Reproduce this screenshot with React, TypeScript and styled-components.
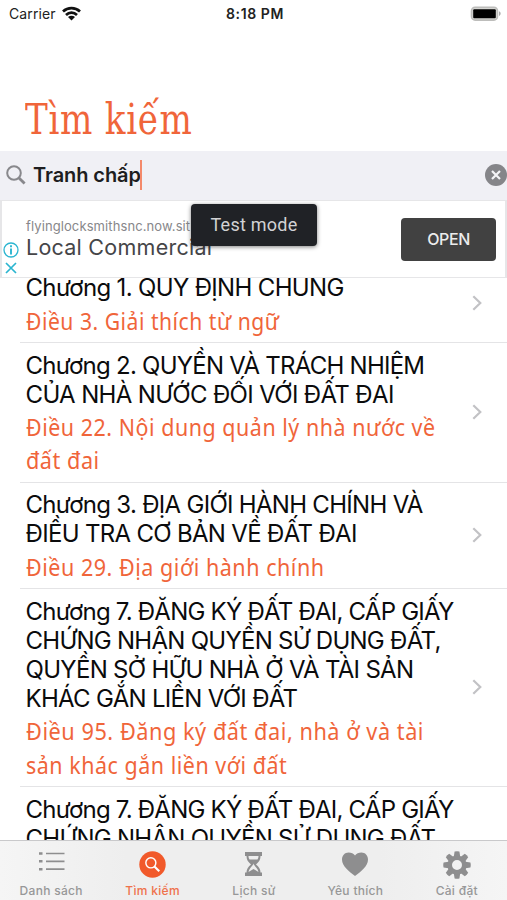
import React from 'react';
import styled, { createGlobalStyle } from 'styled-components';

const ORANGE = '#f0653a';

const Global = createGlobalStyle`
  * { box-sizing: border-box; }
  body { margin: 0; background: #fff; font-family: Inter, "Noto Sans", sans-serif; }
`;

const Screen = styled.main`
  display: flex;
  flex-direction: column;
  width: 507px;
  height: 900px;
  overflow: hidden;
  background: #fff;
  color: #0b0b0c;
`;

const StatusBar = styled.header`
  display: grid;
  grid-template-columns: 1fr auto 1fr;
  align-items: center;
  flex: none;
  height: 27px;
  padding: 0 6px 0 9px;
  font-size: 14px;
  line-height: 27px;
  color: #222;
`;

const Carrier = styled.div`
  display: flex;
  align-items: center;
  gap: 6px;
  letter-spacing: 0.1px;
`;

const Clock = styled.div`
  font-weight: 600;
  letter-spacing: 0.6px;
`;

const Battery = styled.div`
  display: flex;
  justify-content: flex-end;
  padding-bottom: 1px;
`;

const TitleBar = styled.div`
  display: flex;
  align-items: flex-end;
  flex: none;
  height: 124px;
  padding: 0 25px 6px;
`;

const Title = styled.h1`
  margin: 0;
  font: 400 42px/50px "DejaVu Serif Condensed", "DejaVu Serif", serif;
  font-stretch: condensed;
  letter-spacing: 0.8px;
  color: ${ORANGE};
  white-space: nowrap;
  transform: scaleX(0.903);
  transform-origin: left;
`;

const SearchBar = styled.div`
  display: flex;
  align-items: center;
  flex: none;
  height: 49px;
  padding: 0 0 1px 6px;
  background: #f0f0f5;
`;

const Query = styled.div`
  flex: 1;
  display: flex;
  align-items: center;
  margin-left: 7px;
  font-size: 20px;
  font-weight: 600;
  line-height: 28px;
  letter-spacing: -0.08px;
  color: #1d1d20;
`;

const Caret = styled.span`
  width: 2px;
  height: 30px;
  margin-left: -1px;
  background: #f4896a;
`;

const Ad = styled.section`
  position: relative;
  display: flex;
  align-items: center;
  flex: none;
  height: 78px;
  padding-right: 9px;
  background: #fff;
  border: solid #e6e6e8;
  border-width: 1px 2px 1px 2px;
`;

const AdMarks = styled.div`
  display: flex;
  flex-direction: column;
  align-items: center;
  align-self: flex-end;
  gap: 4px;
  width: 18px;
  padding-bottom: 3px;
`;

const AdCopy = styled.div`
  flex: 1;
  padding: 0 0 1px 6px;
  white-space: nowrap;
`;

const AdUrl = styled.div`
  font-size: 13px;
  line-height: 17px;
  letter-spacing: 0.1px;
  color: #87878a;
`;

const AdTitle = styled.div`
  font-size: 21.5px;
  font-weight: 430;
  line-height: 25px;
  letter-spacing: 0.25px;
  color: #454548;
`;

const OpenButton = styled.button`
  flex: none;
  width: 95px;
  height: 43px;
  padding: 0 0 1px;
  border: 0;
  border-radius: 4px;
  background: #414141;
  color: #ececec;
  font: 500 16px Inter, sans-serif;
  letter-spacing: -0.4px;
`;

const Toast = styled.div`
  position: absolute;
  left: 189px;
  top: 3px;
  width: 126px;
  height: 42px;
  border-radius: 4px;
  background: #202226;
  box-shadow: 0 1px 4px rgba(0, 0, 0, 0.5);
  color: #d2d2d4;
  font: 400 18px/42px Roboto, sans-serif;
  letter-spacing: 0.25px;
  text-align: center;
`;

const ListView = styled.div`
  flex: 1;
  min-height: 0;
  overflow: hidden;
`;

const List = styled.ul`
  margin: -12px 0 0;
  padding: 0;
  list-style: none;
`;

const Row = styled.li`
  display: flex;
  align-items: center;
  justify-content: space-between;
  margin-left: 20px;
  padding: 7.4px 25px 5.3px 5.5px;
  border-bottom: 1px solid #e4e4e6;
`;

const Chapter = styled.div<{ $spacing: number }>`
  height: 29.2px;
  font-size: 24px;
  line-height: 29.2px;
  letter-spacing: ${(p) => p.$spacing}px;
  white-space: nowrap;
`;

const Articles = styled.div`
  padding-top: 1px;
`;

const Article = styled.div<{ $squeeze: number }>`
  width: 0;
  height: 33.3px;
  font: 400 24px/33.3px "Noto Sans", sans-serif;
  letter-spacing: 0.6px;
  color: ${ORANGE};
  white-space: nowrap;
  transform: scaleX(${(p) => p.$squeeze});
  transform-origin: left;
`;

const Disclosure = styled.div`
  display: flex;
  padding-bottom: 4px;
`;

const TabBar = styled.nav`
  display: grid;
  grid-template-columns: repeat(5, 1fr);
  flex: none;
  height: 60px;
  border-top: 1px solid #c9c9cb;
  background: linear-gradient(90deg, #f5f5f5, #eeeeee 25%, #eeeeee 75%, #f5f5f5);
`;

const Tab = styled.div<{ $active?: boolean }>`
  display: flex;
  flex-direction: column;
  align-items: center;
  padding-left: 1px;
  color: ${(p) => (p.$active ? ORANGE : '#8e8e8f')};
`;

const TabIcon = styled.div`
  display: flex;
  align-items: flex-start;
  height: 28px;
  margin-top: 10px;
`;

const TabLabel = styled.span`
  margin-top: 4px;
  font-size: 12px;
  font-weight: 500;
  line-height: 16px;
  letter-spacing: 0.3px;
  opacity: 0.9;
`;

type Line = [text: string, fit: number];

const rows: { chapter: Line[]; article: Line[] }[] = [
  {
    chapter: [['Chương 1. QUY ĐỊNH CHUNG', -0.66]],
    article: [['Điều 3. Giải thích từ ngữ', 0.879]],
  },
  {
    chapter: [
      ['Chương 2. QUYỀN VÀ TRÁCH NHIỆM', -0.75],
      ['CỦA NHÀ NƯỚC ĐỐI VỚI ĐẤT ĐAI', -0.65],
    ],
    article: [
      ['Điều 22. Nội dung quản lý nhà nước về', 0.893],
      ['đất đai', 0.9],
    ],
  },
  {
    chapter: [
      ['Chương 3. ĐỊA GIỚI HÀNH CHÍNH VÀ', -0.7],
      ['ĐIỀU TRA CƠ BẢN VỀ ĐẤT ĐAI', -0.68],
    ],
    article: [['Điều 29. Địa giới hành chính', 0.896]],
  },
  {
    chapter: [
      ['Chương 7. ĐĂNG KÝ ĐẤT ĐAI, CẤP GIẤY', -0.77],
      ['CHỨNG NHẬN QUYỀN SỬ DỤNG ĐẤT,', -0.73],
      ['QUYỀN SỞ HỮU NHÀ Ở VÀ TÀI SẢN', -0.7],
      ['KHÁC GẮN LIỀN VỚI ĐẤT', -0.7],
    ],
    article: [
      ['Điều 95. Đăng ký đất đai, nhà ở và tài', 0.904],
      ['sản khác gắn liền với đất', 0.893],
    ],
  },
  {
    chapter: [
      ['Chương 7. ĐĂNG KÝ ĐẤT ĐAI, CẤP GIẤY', -0.77],
      ['CHỨNG NHẬN QUYỀN SỬ DỤNG ĐẤT,', -0.73],
    ],
    article: [],
  },
];

const WifiIcon = () => (
  <svg width="19" height="15" viewBox="0 0 19 15" fill="none" stroke="#111" strokeWidth="2.7">
    <path d="M1 5.400C5.800.9 13.200.9 18 5.400" />
    <path d="M4 8.900c3.200-3 7.800-3 11 0" />
    <path d="M9.500 14.600 6 11.100c2-1.800 5-1.800 7 0z" fill="#111" stroke="none" />
  </svg>
);

const BatteryIcon = () => (
  <svg width="31" height="15" viewBox="0 0 31 15">
    <rect x="1.500" y="1.300" width="26" height="12.800" rx="3.600" fill="#d6d6d3" stroke="#bdbdbb" strokeWidth="1.600" />
    <rect x="3.200" y="3.200" width="22.600" height="9" rx="1" fill="#000" />
    <path d="M29 5.300c2.200.8 2.200 3.800 0 4.600z" fill="#aaa" />
  </svg>
);

const SearchIcon = () => (
  <svg width="20" height="20" viewBox="0 0 20 20" fill="none" stroke="#88888c">
    <circle cx="8" cy="8" r="6.800" strokeWidth="2" />
    <path d="m13 13 5.600 5.600" strokeWidth="2.800" />
  </svg>
);

const ClearIcon = () => (
  <svg width="22" height="22" viewBox="0 0 22 22">
    <circle cx="11" cy="11" r="11" fill="#858589" />
    <path d="m7 7 8 8M15 7l-8 8" stroke="#f4f4f8" strokeWidth="2.200" />
  </svg>
);

const InfoIcon = () => (
  <svg width="16" height="16" viewBox="0 0 16 16" fill="none" stroke="#2bb5d0">
    <circle cx="8" cy="8" r="7" strokeWidth="1.300" />
    <path d="M8 3.300v2M8 6.500v6" strokeWidth="1.900" />
  </svg>
);

const CloseIcon = () => (
  <svg width="12" height="12" viewBox="0 0 12 12" stroke="#2bb5d0" strokeWidth="1.700">
    <path d="m1 1 10 10M11 1 1 11" />
  </svg>
);

const ChevronIcon = () => (
  <svg width="10" height="16" viewBox="0 0 10 16" fill="none" stroke="#c2c2c5" strokeWidth="2.200">
    <path d="m1.300 1.200 7 6.800-7 6.800" />
  </svg>
);

const ListIcon = () => (
  <svg width="27" height="20" viewBox="0 0 27 20" stroke="currentColor" strokeWidth="1.700">
    <path d="M8 2.500h18.500M8 10.300h18.500M8 18.200h18.500" />
    <path d="M1 2.500h3.500M1 10.300h3.500M1 18.200h3.500" strokeWidth="2.500" />
  </svg>
);

const SearchBadgeIcon = () => (
  <svg width="27" height="27" viewBox="0 0 28 28">
    <circle cx="14" cy="14" r="13.700" fill="#f1592a" />
    <circle cx="12.300" cy="12.300" r="5.200" fill="none" stroke="#fff" strokeWidth="1.500" />
    <path d="m16 16 5 5" stroke="#fff" strokeWidth="2.200" />
  </svg>
);

const HourglassIcon = () => (
  <svg width="19" height="26" viewBox="0 0 19 26">
    <path
      d="M1 1h17v4h-1.500c0 3.500-1.500 6-4.500 8.500 3 2.500 4.500 4.500 4.500 8H18V25H1v-3.500h1.500c0-3.500 1.500-5.500 4.500-8C4 11 2.500 8.500 2.500 5H1z"
      fill="currentColor"
    />
    <path d="M4.500 5h10c0 1.500-.4 2.500-1 3.500h-8c-.6-1-1-2-1-3.500zM9.500 12.500c.5 2.500 4 4 5 8.500l-5-3-5 3c1-4.500 4.500-6 5-8.500z" fill="#eee" />
  </svg>
);

const HeartIcon = () => (
  <svg width="28" height="26" viewBox="0 0 28 26">
    <path d="M14 25C8 20.500 1 15 1 8.500 1 4.300 4 1.500 7.500 1.500c2.800 0 5.200 1 6.500 3 1.300-2 3.700-3 6.500-3C24 1.500 27 4.300 27 8.500 27 15 20 20.500 14 25z" fill="currentColor" />
  </svg>
);

const GearIcon = () => (
  <svg width="28" height="28" viewBox="0 0 28 28">
    <g fill="currentColor">
      {[0, 45, 90, 135, 180, 225, 270, 315].map((angle) => (
        <path key={angle} d="M10.600 7 11.600.6q2.400-.7 4.800 0L17.400 7z" transform={`rotate(${angle} 14 14)`} />
      ))}
    </g>
    <circle cx="14" cy="14" r="7.300" fill="none" stroke="currentColor" strokeWidth="4.600" />
  </svg>
);

const tabs = [
  { label: 'Danh sách', icon: <ListIcon /> },
  { label: 'Tìm kiếm', icon: <SearchBadgeIcon />, active: true },
  { label: 'Lịch sử', icon: <HourglassIcon /> },
  { label: 'Yêu thích', icon: <HeartIcon /> },
  { label: 'Cài đặt', icon: <GearIcon /> },
];

export default function App() {
  return (
    <Screen>
      <Global />
      <StatusBar>
        <Carrier>
          Carrier
          <WifiIcon />
        </Carrier>
        <Clock>8:18 PM</Clock>
        <Battery>
          <BatteryIcon />
        </Battery>
      </StatusBar>
      <TitleBar>
        <Title>Tìm kiếm</Title>
      </TitleBar>
      <SearchBar>
        <SearchIcon />
        <Query>
          Tranh chấp
          <Caret />
        </Query>
        <ClearIcon />
      </SearchBar>
      <Ad>
        <AdMarks>
          <InfoIcon />
          <CloseIcon />
        </AdMarks>
        <AdCopy>
          <AdUrl>flyinglocksmithsnc.now.sit</AdUrl>
          <AdTitle>Local Commercial</AdTitle>
        </AdCopy>
        <OpenButton>OPEN</OpenButton>
        <Toast>Test mode</Toast>
      </Ad>
      <ListView>
        <List>
          {rows.map((row, i) => (
            <Row key={i}>
              <div>
                {row.chapter.map(([text, spacing]) => (
                  <Chapter key={text} $spacing={spacing}>
                    {text}
                  </Chapter>
                ))}
                <Articles>
                  {row.article.map(([text, squeeze]) => (
                    <Article key={text} $squeeze={squeeze}>
                      {text}
                    </Article>
                  ))}
                </Articles>
              </div>
              {row.article.length > 0 && (
                <Disclosure>
                  <ChevronIcon />
                </Disclosure>
              )}
            </Row>
          ))}
        </List>
      </ListView>
      <TabBar>
        {tabs.map((tab) => (
          <Tab key={tab.label} $active={tab.active}>
            <TabIcon>{tab.icon}</TabIcon>
            <TabLabel>{tab.label}</TabLabel>
          </Tab>
        ))}
      </TabBar>
    </Screen>
  );
}
